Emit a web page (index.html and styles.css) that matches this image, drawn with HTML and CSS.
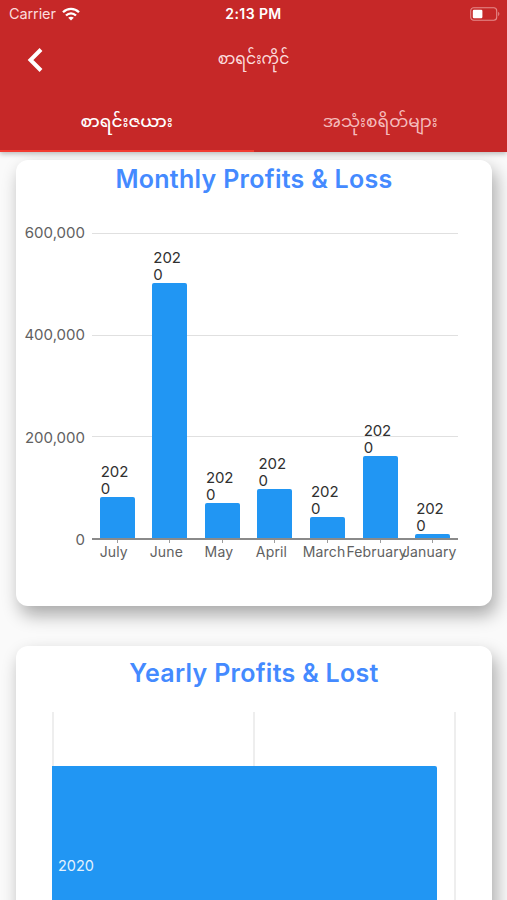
FILE: index.html
```
<!DOCTYPE html>
<html lang="my">
<head>
    <meta charset="UTF-8">
    <meta name="viewport" content="width=device-width, initial-scale=1.0">
    <title>စာရင်းကိုင်</title>
    <link rel="stylesheet" href="styles.css">
</head>
<body>

    <header class="app-bar">
        <div class="status">
            <div class="carrier">
                <span>Carrier</span>
                <svg class="wifi" viewBox="0 0 18 14" width="18" height="14">
                    <g fill="none" stroke="#fff" stroke-width="2.3">
                        <path d="M1 5.2C5.5 .7 12.5 .7 17 5.2"/>
                        <path d="M4 8.5C6.9 5.6 11.1 5.6 14 8.5"/>
                    </g>
                    <path fill="#fff" d="M9 13.6L6.2 10.7C7.8 9.3 10.2 9.3 11.8 10.7Z"/>
                </svg>
            </div>
            <div class="time">2:13 PM</div>
            <svg class="battery" viewBox="0 0 31 14" width="31" height="14">
                <rect x=".7" y=".7" width="26" height="12.6" rx="3" fill="none" stroke="#e58b8b" stroke-width="1.1"/>
                <rect x="2.8" y="2.8" width="9.6" height="8.4" rx="1.2" fill="#fff"/>
                <path d="M28.2 4.8Q30.6 7 28.2 9.2Z" fill="#e58b8b"/>
            </svg>
        </div>
        <div class="toolbar">
            <svg class="back" viewBox="0 0 16 26" width="16" height="26">
                <path d="M14 2.5L3.5 13L14 23.5" fill="none" stroke="#fff" stroke-width="4"/>
            </svg>
            <h1>စာရင်းကိုင်</h1>
        </div>
        <nav class="tabs">
            <a class="tab active">စာရင်းဇယား</a>
            <a class="tab">အသုံးစရိတ်များ</a>
        </nav>
    </header>

    <main>
        <section class="card monthly">
            <h2>Monthly Profits &amp; Loss</h2>
            <div class="chart">
                <div class="y-axis">
                    <span>600,000</span>
                    <span>400,000</span>
                    <span>200,000</span>
                    <span>0</span>
                </div>
                <div class="plot">
                    <div class="lines"><i></i><i></i><i></i></div>
                    <div class="bars" id="bars"></div>
                </div>
                <div class="x-axis" id="months"></div>
            </div>
        </section>

        <section class="card yearly">
            <h2>Yearly Profits &amp; Lost</h2>
            <div class="year-plot">
                <div class="year-lines"><i></i><i></i><i></i></div>
                <div class="year-bar">2020</div>
            </div>
        </section>
    </main>

    <script src="script.js"></script>
</body>
</html>
```
FILE: styles.css
```
* {
    box-sizing: border-box;
}
body {
    margin: 0;
    height: 900px;
    overflow: hidden;
    background: #fafafa;
    font-family: Inter, "Noto Sans", "Noto Sans Myanmar", sans-serif;
}
h1, h2 {
    margin: 0;
}

/* top bar */
.app-bar {
    position: relative;
    z-index: 1;
    height: 152px;
    background: #c62828;
    color: #fff;
    box-shadow: 0 2px 5px rgba(0,0,0,0.25);
}
.status {
    display: grid;
    grid-template-columns: 1fr auto 1fr;
    align-items: center;
    height: 27px;
    padding: 0 6px 0 9px;
}
.carrier {
    display: flex;
    align-items: center;
    gap: 6px;
    font-size: 14.5px;
    letter-spacing: -0.1px;
    color: #fbdcdc;
}
.time {
    font-size: 14px;
    font-weight: 600;
    letter-spacing: 0.4px;
    margin-right: 3px;
}
.battery {
    justify-self: end;
}
.toolbar {
    display: grid;
    grid-template-columns: 56px 1fr 56px;
    align-items: center;
    height: 65px;
}
.back {
    margin-left: 27px;
}
h1 {
    padding-top: 1px;
    font-size: 15.6px;
    font-weight: 400;
    text-align: center;
    white-space: nowrap;
    color: #fbdcdc;
}
.tabs {
    display: flex;
    height: 60px;
}
.tab {
    flex: 1;
    display: flex;
    align-items: center;
    justify-content: center;
    padding-top: 3px;
    font-size: 17px;
    white-space: nowrap;
    color: #f5bcbc;
    border-bottom: 2px solid transparent;
}
.tab.active {
    font-weight: 500;
    color: #fff;
    border-bottom-color: #f23a30;
}

/* cards */
main {
    padding: 8px 15px 0 16px;
}
.card {
    background: #fff;
    border-radius: 12px;
    box-shadow: 4px 9px 18px rgba(0,0,0,0.33);
}
.card h2 {
    font-size: 25px;
    line-height: 30px;
    font-weight: 600;
    letter-spacing: 0.28px;
    text-align: center;
    white-space: nowrap;
    color: #448aff;
}
.monthly {
    height: 446px;
    padding-top: 4px;
    margin-bottom: 40px;
}
.yearly {
    height: 446px;
    padding-top: 12px;
}

/* monthly chart */
.chart {
    display: grid;
    grid-template-columns: 69px 366px;
    grid-template-rows: 307px auto;
    column-gap: 7px;
    margin-top: 39px;
    font-size: 15px;
    color: #616161;
}
.y-axis {
    display: flex;
    flex-direction: column;
    justify-content: space-between;
    margin: -10px 0;
    line-height: 20px;
    text-align: right;
}
.plot {
    display: grid;
    border-bottom: 2px solid #8a8a8a;
}
.lines, .bars {
    grid-area: 1 / 1;
}
.lines {
    display: grid;
    grid-template-rows: repeat(3, 1fr);
}
.lines i {
    border-top: 1px solid #e0e0e0;
}
.bars, .x-axis {
    display: grid;
    grid-template-columns: repeat(7, 1fr);
    margin: 0 -1px;
}
.bars {
    align-items: end;
    justify-items: center;
}
.column {
    width: 35px;
}
.column span {
    display: block;
    width: 33px;
    padding-left: 1px;
    line-height: 17px;
    letter-spacing: -0.1px;
    word-break: break-all;
    color: #303030;
}
.bar {
    background: #2196f3;
    border-radius: 2px 2px 0 0;
}
.x-axis {
    grid-column: 2;
    font-size: 14px;
    letter-spacing: 0.15px;
}
.x-axis div {
    display: flex;
    flex-direction: column;
    align-items: center;
    line-height: 17px;
    width: 0;
    justify-self: center;
    white-space: nowrap;
}
.x-axis div::before {
    content: "";
    width: 1px;
    height: 3px;
    background: #9e9e9e;
}
.x-axis span {
    margin-right: 7px;
}

/* yearly chart */
.year-plot {
    display: grid;
    width: 404px;
    height: 308px;
    margin: 24px 0 0 36px;
}
.year-lines, .year-bar {
    grid-area: 1 / 1;
}
.year-lines {
    display: flex;
    justify-content: space-between;
}
.year-lines i {
    width: 2px;
    background: #eee;
}
.year-bar {
    display: flex;
    align-items: center;
    width: 385px;
    height: 198px;
    margin-top: 54px;
    padding-left: 6px;
    background: #2196f3;
    border-radius: 0 2px 2px 0;
    font-size: 14.5px;
    color: #e3f2fd;
}
```
FILE: script.js
```
const data = [
    { month: "July", year: 2020, value: 81000 },
    { month: "June", year: 2020, value: 502000 },
    { month: "May", year: 2020, value: 69500 },
    { month: "April", year: 2020, value: 96000 },
    { month: "March", year: 2020, value: 41000 },
    { month: "February", year: 2020, value: 160500 },
    { month: "January", year: 2020, value: 7000 }
];

const plotHeight = 305;
const maxValue = 600000;

data.forEach(item => {
    const height = item.value / maxValue * plotHeight;
    document.getElementById("bars").innerHTML += `
        <div class="column">
            <span>${item.year}</span>
            <div class="bar" style="height: ${height.toFixed(1)}px"></div>
        </div>
    `;
    document.getElementById("months").innerHTML += `<div><span>${item.month}</span></div>`;
});
```
